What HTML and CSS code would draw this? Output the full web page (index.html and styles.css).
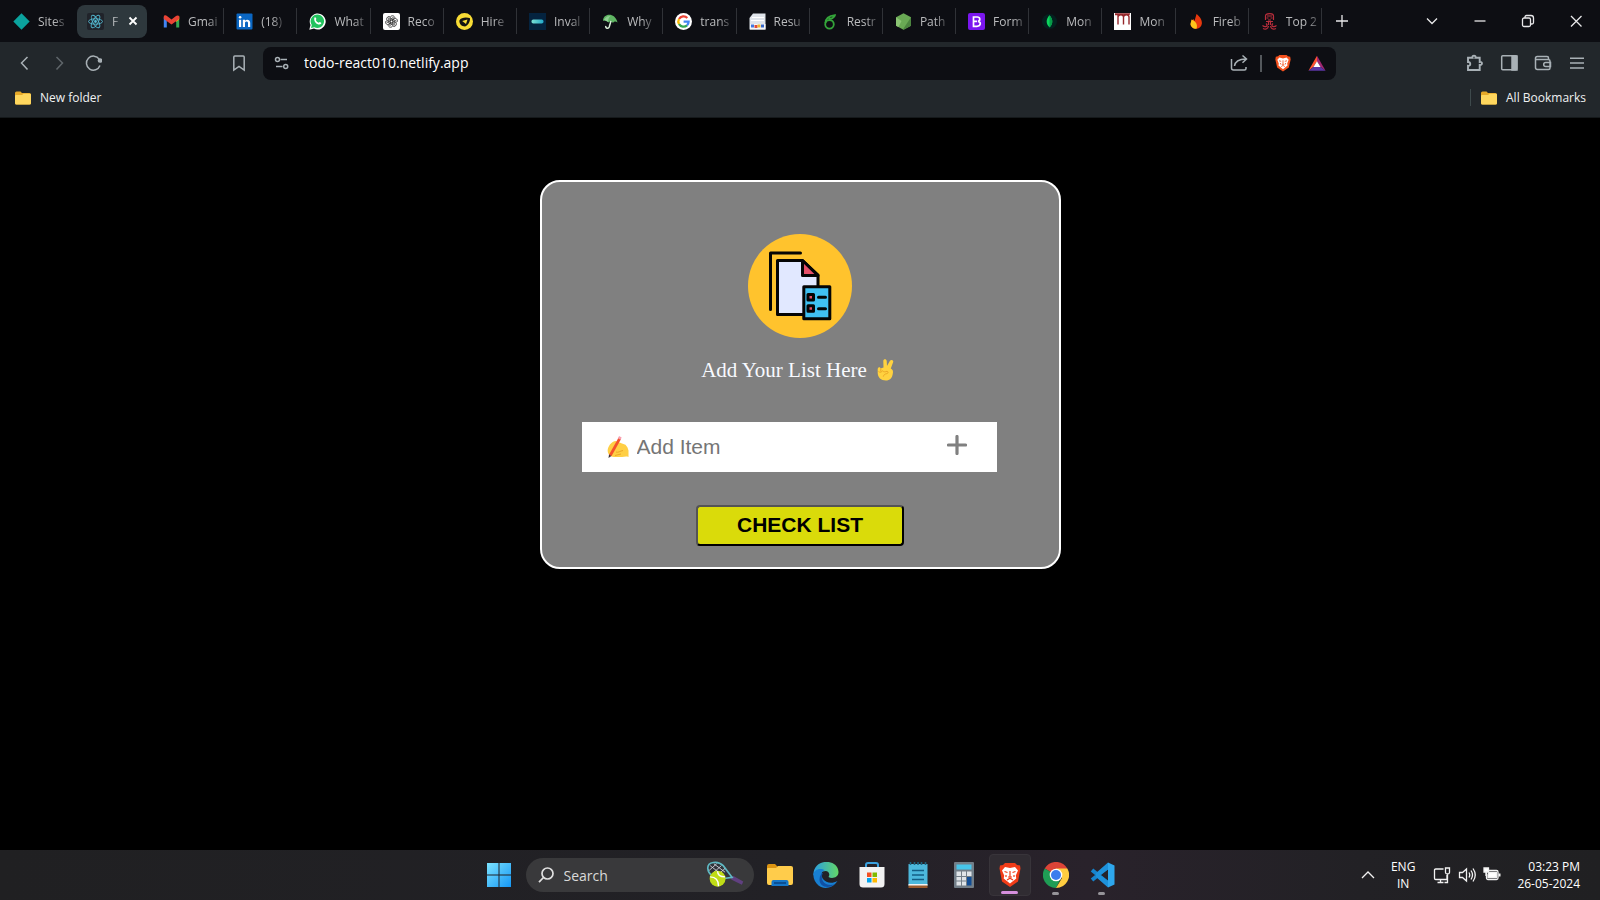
FILE: index.html
```
<!DOCTYPE html>
<html lang="en">
<head>
<meta charset="utf-8">
<title>Todo list</title>
<link rel="stylesheet" href="styles.css">
</head>
<body>
<header class="browser">
  <div class="tabstrip">
    <nav class="tabs" aria-label="Open tabs">
      <button class="tab pinned"><svg class="fav" viewBox="0 0 17 17"><path d="M8.500 .3 16.700 8.500 8.500 16.700.3 8.500z" fill="#0ba39e"/></svg><span>Sites</span></button>
      <button class="tab active"><svg class="fav" viewBox="0 0 17 17"><rect width="17" height="17" rx="2" fill="#20232a"/><g fill="none" stroke="#53b9d1" stroke-width=".9"><ellipse cx="8.500" cy="8.500" rx="7" ry="2.700"/><ellipse cx="8.500" cy="8.500" rx="7" ry="2.700" transform="rotate(60 8.500 8.500)"/><ellipse cx="8.500" cy="8.500" rx="7" ry="2.700" transform="rotate(120 8.500 8.500)"/></g><circle cx="8.500" cy="8.500" r="1.400" fill="#53b9d1"/></svg><span class="short">F</span><svg class="x" viewBox="0 0 10 10"><path d="m1.500 1.500 7 7m0-7-7 7" stroke="#fff" stroke-width="1.800"/></svg></button>
      <button class="tab"><svg class="fav" viewBox="0 0 17 17"><path d="M.8 4v10.500h3V7z" fill="#4285f4"/><path d="M16.200 4v10.500h-3V7z" fill="#34a853"/><path d="M13.200 4.500 16.200 3v3.500l-3 2.500z" fill="#fbbc04"/><path d="M.8 3.500C1 2 3 2 4 3l4.500 3.500L13 3c1-1 3-.8 3.200.8V6L8.500 11.500.8 6z" fill="#ea4335"/></svg><span>Gmai</span></button>
      <button class="tab"><svg class="fav" viewBox="0 0 17 17"><rect x=".5" y=".5" width="16" height="16" rx="1" fill="#0a66c2"/><path d="M3 6.800h2.200V14H3zM6.800 6.800H9v1c1.300-2 5.200-1.500 5.200 2V14H12v-4c0-2-3-2-3 0v4H6.800z" fill="#fff"/><circle cx="4.100" cy="4.300" r="1.300" fill="#fff"/></svg><span>(18)</span></button>
      <button class="tab"><svg class="fav" viewBox="0 0 17 17"><path d="M.3 16.700 1.500 12A8 8 0 1 1 5 15.600z" fill="#fff"/><path d="m2 15 .8-3A6.700 6.700 0 1 1 5.300 14.200z" fill="#22c35e"/><path d="M5.400 4.700c1-1 1.400-.3 2 1.400L6.800 7c.7 1.500 1.500 2.200 3 2.800l.9-.9c2 .8 2 1.100 1.100 2.200C9.500 13 4 9 5.400 4.700z" fill="#fff"/></svg><span>What</span></button>
      <button class="tab"><svg class="fav" viewBox="0 0 17 17"><rect width="17" height="17" rx="2" fill="#fff"/><g fill="none" stroke="#222" stroke-width=".8"><path id="petal" d="M7.200 9.300V5C7.200 2.200 11.200 2 11.800 4.600M7.200 6.200 10.600 4.300"/><use href="#petal" transform="rotate(60 8.500 8.500)"/><use href="#petal" transform="rotate(120 8.500 8.500)"/><use href="#petal" transform="rotate(180 8.500 8.500)"/><use href="#petal" transform="rotate(240 8.500 8.500)"/><use href="#petal" transform="rotate(300 8.500 8.500)"/></g></svg><span>Reco</span></button>
      <button class="tab"><svg class="fav" viewBox="0 0 17 17"><circle cx="8.500" cy="8.500" r="8.500" fill="#f8dc35"/><path d="M3.400 7.500C5 4.200 11 4 14 5.300c.3 3-2 7.500-5 8.200C5.500 13.500 3 10.500 3.400 7.500z" fill="#131313"/><path d="M6.200 8 11.500 6.500 10 11z" fill="#f8dc35"/></svg><span>Hire</span></button>
      <button class="tab"><svg class="fav" viewBox="0 0 17 17"><defs><linearGradient id="bar"><stop stop-color="#7be0d4"/><stop offset="1" stop-color="#22a9c9"/></linearGradient></defs><rect width="17" height="17" fill="#04233f"/><rect x="2.500" y="6.500" width="12" height="4" rx="1.800" fill="url(#bar)"/></svg><span>Inval</span></button>
      <button class="tab"><svg class="fav" viewBox="0 0 17 17"><path d="M1 8C1 0 13-1 15.500 9.500c-2-1.500-3.500-1-4.500.5C9.500 8 8 8 6.200 9.500 5 7.500 3 7 1 8z" fill="#5fb563"/><path d="m9 8-1.800 6c-.8 2.300-4.200 1.200-3.300-1" fill="none" stroke="#d9eed9" stroke-width="1.500"/><path d="M2 7C4 3.500 6 3 8.500 3 6.500 4.500 6 6.500 6.200 9z" fill="#8fcf92"/></svg><span>Why</span></button>
      <button class="tab"><svg class="fav" viewBox="0 0 17 17"><circle cx="8.500" cy="8.500" r="8.500" fill="#fff"/><g fill="none" stroke-width="2.300"><path d="M12.300 5A5.200 5.200 0 0 0 4 6" stroke="#ea4335"/><path d="M4 6a5.200 5.200 0 0 0 0 5" stroke="#fbbc05"/><path d="M4 11a5.200 5.200 0 0 0 8 1.400" stroke="#34a853"/><path d="M12 12.400a5.200 5.200 0 0 0 1.600-3.700h-5" stroke="#4285f4"/></g></svg><span>trans</span></button>
      <button class="tab"><svg class="fav" viewBox="0 0 17 17"><path d="M4 .5h12.500v16H.5V5z" fill="#dfe4ea"/><path d="M3 4.500h12M2 7.500h13" stroke="#fff" stroke-width="1.200"/><path d="M1 11h15.500v5.500H1z" fill="#f7f7f7"/><path d="M2 11.500h3v3H2z" fill="#4178e0"/><path d="M5.500 12h3v3h-3z" fill="#e14b3d"/><path d="M8.500 11.500h3v3h-3z" fill="#f1b52c"/><path d="M12 11.500h3v3h-3z" fill="#3667c8"/></svg><span>Resu</span></button>
      <button class="tab"><svg class="fav" viewBox="0 0 17 17"><g fill="none" stroke="#34a53a" stroke-width="1.800"><circle cx="7.500" cy="11.300" r="4.300"/><path d="M3.500 10C3.500 6 7 3 13 2.200 12.500 5 9 6.200 6.500 5.500"/></g></svg><span>Restr</span></button>
      <button class="tab"><svg class="fav" viewBox="0 0 17 17"><path d="m8.500.3 7.500 4v8.400l-7.500 4-7.500-4V4.300z" fill="#69a954"/><path d="M1 4.300 6.500 8 3.500 14 1 12.700z" fill="#8bc574"/><path d="m16 4.300-8 12 .5.400 7.500-4z" fill="#4c853f"/></svg><span>Path</span></button>
      <button class="tab"><svg class="fav" viewBox="0 0 17 17"><rect width="17" height="17" rx="2" fill="#7b16ef"/><path d="M5.500 4h3.700c3.400 0 3.200 3.800.8 4.300 3.300.5 3 5-1 5H5.500zM5.500 8.400H9" fill="none" stroke="#fff" stroke-width="1.700"/></svg><span>Form</span></button>
      <button class="tab"><svg class="fav" viewBox="0 0 17 17"><circle cx="8.500" cy="8.500" r="7.500" fill="#04201f"/><path d="M8.500 2.300c4 4.200 3.500 9 0 12-3.500-3-4-7.800 0-12z" fill="#0bd55c"/><path d="M8.500 2.300v12.500c3.500-3.500 4-8 0-12.500z" fill="#079b48"/></svg><span>Mon</span></button>
      <button class="tab"><svg class="fav" viewBox="0 0 17 17"><path fill="#fff" d="M0 0h17v17H0z"/><path d="M1 1.500h3v10M4 4c.5-3 5.500-3 5.500 0v7.500M9.500 4c.5-3 5.500-3 5.500 0v7.500M1 1h15" fill="none" stroke="#96272b" stroke-width="1.400"/></svg><span>Mon</span></button>
      <button class="tab"><svg class="fav" viewBox="0 0 17 17"><path d="M8.500 1c3 2 6 6 5.300 10-.8 6-9.200 6.500-11 1-.8-3 1.500-5 2.700-6l1 2z" fill="#e8380d"/><path d="M3.500 6.500c4 1.500 6.500 5 5 9.300C5 16 2.500 13.500 2.500 11z" fill="#ffc51b"/></svg><span>Fireb</span></button>
      <button class="tab"><svg class="fav" viewBox="0 0 17 17"><g fill="none" stroke="#b92e3c" stroke-width="1.200"><path d="M4.500 7V3c0-3.200 8-3.200 8 0v4M6 3h5M5.500 5h2m2 0h2M7 7h3M5 8.500h7M7.500 9v3M9.500 9v3M5 10.500c3 3-1 4-3.500 2m10.500-2c-3 3 1 4 3.500 2M2 15.500c3 1.500 5 0 5.500-2.500m7.500 2.500c-3 1.500-5 0-5.500-2.500"/></g></svg><span>Top 2</span></button>
    </nav>
    <button class="newtab" aria-label="New tab"><svg viewBox="0 0 14 14"><path d="M7 1v12M1 7h12"/></svg></button>
    <div class="window-controls">
      <button aria-label="Search tabs"><svg viewBox="0 0 14 14"><path d="m2 4.500 5 5 5-5"/></svg></button>
      <button aria-label="Minimise"><svg viewBox="0 0 14 14"><path d="M1.500 7h11"/></svg></button>
      <button aria-label="Restore"><svg viewBox="0 0 14 14"><rect x="1.500" y="4" width="8" height="8.500" rx="1.500"/><path d="M4 4V3q0-1.500 1.500-1.500H10q2.500 0 2.500 2.500v4.500Q12.500 10 11 10h-1.500"/></svg></button>
      <button aria-label="Close"><svg viewBox="0 0 14 14"><path d="m2 2 10.500 10.500m0-10.500L2 12.500"/></svg></button>
    </div>
  </div>
  <div class="toolbar">
    <div class="history">
      <button aria-label="Back"><svg viewBox="0 0 18 18"><path d="M11.500 3 5.500 9l6 6.500"/></svg></button>
      <button class="dim" aria-label="Forward"><svg viewBox="0 0 18 18"><path d="m6.500 3 6 6-6 6.500"/></svg></button>
      <button aria-label="Reload"><svg viewBox="0 0 18 18"><path d="M16 11.500A7 7 0 1 1 15.300 5.300"/><circle cx="16" cy="6.500" r="1.600" fill="#a9b1b6"/></svg></button>
    </div>
    <button class="bookmark" aria-label="Bookmark this page"><svg viewBox="0 0 18 18"><path d="M3.800 3q0-1 1-1h8.400q1 0 1 1v13L9 12.300 3.800 16z"/></svg></button>
    <div class="address">
      <button aria-label="Site information"><svg viewBox="0 0 18 18"><circle cx="4.500" cy="5.500" r="2"/><path d="M7.500 5.500H14M3 12.500h6.500"/><circle cx="12.700" cy="12.500" r="2"/></svg></button>
      <input type="text" value="todo-react010.netlify.app" aria-label="Address">
      <button aria-label="Share"><svg viewBox="0 0 18 18"><path d="M1.500 5v9q0 2 2 2h11q1.500 0 1.500-1.500V13M4.500 12C5 7.500 8 5.200 16 5M12.500 1.500 16.500 5l-4 3.800"/></svg></button>
      <span class="bar"></span>
      <button aria-label="Shields"><svg viewBox="0 0 18 20"><path d="M5 1h8l1.500 1.500L17 3l.5 3-2 9L9 19.500 2.500 15l-2-9L1 3l2.500-.5z" fill="#f4511e" stroke="none"/><path d="m5 4 4 1 4-1 2.300 2.500-1.600 4 .3 2.200L9 17 4 12.700l.3-2.200-1.600-4z" fill="#fff" stroke="none"/><path d="m4.500 7.500 2.500.7M13.500 7.500l-2.500.7M9 7v4M7.500 11.500h3M7 14l2-1.300 2 1.300M6.200 10v1.500M11.800 10v1.500" stroke="#f4511e" stroke-width=".9"/></svg></button>
      <button class="bat" aria-label="Rewards"><svg viewBox="0 0 20 18"><g stroke="none"><path d="M10 1 .5 17.500 6 13.500 10 7z" fill="#ff5230"/><path d="m10 1 9.500 16.500L14 13.500 10 7z" fill="#a02672"/><path d="M.5 17.500h19L14 13.500H6z" fill="#5b36a4"/><path d="m10 7 4 6.500H6z" fill="#fff"/></g></svg></button>
    </div>
    <div class="extras">
      <button aria-label="Extensions"><svg viewBox="0 0 18 18"><path stroke-width="1.900" d="M2 3.800h4.500C5.500 1 10.500 1 9.500 3.800h4.200V8c3-.8 3 3.500 0 3v5H2v-4.200c3 .5 3-4.300 0-3.800z"/></svg></button>
      <button aria-label="Sidebar"><svg viewBox="0 0 18 18"><rect x="1.700" y="1.700" width="15" height="14" rx="1"/><path d="M12 2h5v14h-5z" fill="#a9b1b6"/></svg></button>
      <button aria-label="Wallet"><svg viewBox="0 0 18 18"><path d="M14.500 5.500V4q0-1.500-1.500-1.500H3.200q-1.700 0-1.700 1.700T3.200 5.500h11q1.800 0 1.800 1.500v7q0 1.500-1.500 1.500h-11q-2 0-2-2V4M16.500 8.500h-4.800q-2 0-2 2t2 2h4.800z"/></svg></button>
      <button aria-label="Menu"><svg viewBox="0 0 18 18"><path d="M2 4.200h14M2 9h14M2 14h14"/></svg></button>
    </div>
  </div>
  <div class="bookmarks">
    <a href="#"><svg class="folder" viewBox="0 0 16 14"><path d="M0 2Q0 .5 1.500.5h4L7 2h7.500Q16 2 16 3.500v8.500q0 1.500-1.500 1.500h-13Q0 13.500 0 12z" fill="#e7a928"/><path d="M0 5q0-1 1-1h6l1.500-1.300h6Q16 2.700 16 4v8q0 1.500-1.500 1.500h-13Q0 13.500 0 12z" fill="#ffd75e"/></svg>New folder</a>
    <a class="all" href="#"><svg class="folder" viewBox="0 0 16 14"><path d="M0 2Q0 .5 1.500.5h4L7 2h7.500Q16 2 16 3.500v8.500q0 1.500-1.500 1.500h-13Q0 13.500 0 12z" fill="#e7a928"/><path d="M0 5q0-1 1-1h6l1.500-1.300h6Q16 2.700 16 4v8q0 1.500-1.500 1.500h-13Q0 13.500 0 12z" fill="#ffd75e"/></svg>All Bookmarks</a>
  </div>
</header>

<main class="page">
  <form class="card">
    <svg class="logo" viewBox="0 0 104 104"><circle cx="52" cy="52" r="52" fill="#ffc32d"/><g stroke="#050505" stroke-width="3" stroke-linecap="round" stroke-linejoin="round"><path d="M22.500 75.500V19H52.500" fill="none"/><path d="M29.500 26.500h25L70 41v39.500H29.500z" fill="#e1e8ff"/><path d="M54.500 26.500V41.500H70z" fill="#e64f68"/><path d="M55.800 52.800h26v32h-26z" fill="#40c1f3"/><path d="M60 60.500h5.500V66H60zM60 71.800h5.500v5.500H60z" fill="#e64f68"/><path d="M70.500 63.300h7M70.500 74.700h7"/></g></svg>
    <p class="caption">Add Your List Here <svg class="victory" viewBox="0 0 18 22" role="img" aria-label="Victory hand"><path d="M3.500 9.500 6.500 8.500 6.300 2.200C6.300-.2 9.500-.2 9.700 2L10 7l2.800-5.100c1.200-2 4.200-.6 3.300 1.400L13.800 9.500c2 1 2.500 2.500 2 5-.5 4.500-3 7-7 7C4 21.500.8 18.500.7 14V10C1 7.800 3.400 7.800 3.500 9.500z" fill="#ffd23f"/><path d="M1.500 12.500c1.500 1.200 3 1 4-.8 1 1.500 3 1.200 4.500.6 1.500.3 1.500 2-.2 2.300-2.200.4-3.200 1.500-3.500 3M3.800 9.500v3" fill="none" stroke="#eca727"/></svg></p>
    <div class="entry">
      <svg class="writing" viewBox="0 0 22 22" aria-hidden="true"><path d="M.8 13C2 8.500 5.500 5.500 8.500 5l4 1.500 2.500 1 3.500 1.300 2 2.700 1 3v6.500c-3-1-4.500.2-7 0H7C3 20.500 0 18 .8 13z" fill="#ffcf45"/><path d="M9 16c2 1 4-1 7-1.500m-8 5 6-1.500" stroke="#eca727" fill="none"/><path d="m3.200 19.500 9.500-17" stroke="#f4512c" stroke-width="2.800"/><path d="m12.200 3 1.200-2.200" stroke="#f7a1b2" stroke-width="3"/><path d="m2 18.500 2.400 1.400-2.900 2z" fill="#39353a"/></svg>
      <input type="text" placeholder="Add Item" aria-label="Add Item">
      <button type="button" aria-label="Add"><svg viewBox="0 0 20 20"><path d="M10 1.500v17M1.500 10h17" stroke="#808080" stroke-width="3.200" stroke-linecap="round"/></svg></button>
    </div>
    <button class="check" type="button">CHECK LIST</button>
  </form>
</main>

<footer class="taskbar">
  <div></div>
  <div class="apps">
    <button aria-label="Start"><svg viewBox="0 0 26 26"><defs><linearGradient id="win" x2="1" y2="1"><stop stop-color="#7ce3ff"/><stop offset="1" stop-color="#1597f5"/></linearGradient></defs><path d="M1 1h11.500v11.500H1zM13.500 1H25v11.500H13.500zM1 13.500h11.500V25H1zM13.500 13.500H25V25H13.500z" fill="url(#win)"/></svg></button>
    <label class="search"><svg class="lens" viewBox="0 0 16 16"><circle cx="9.500" cy="6.500" r="5.500"/><path d="M5.500 10.500 1 15.200"/></svg><input type="search" placeholder="Search" aria-label="Search"><svg class="racket" viewBox="0 0 42 30"><path d="m25 17 4-1 10.500 6-1.500 3.500L27 20z" fill="#604080"/><path d="M1.500 8C1 1 12-1 18 5l9.500 12.500L17 19C8 18 2 14 1.500 8z" fill="#30343a" stroke="#5fb9c3" stroke-width="1.800"/><path d="m4 5 13 10M8 3l12 9M3 10l8-7M7 13l9-8M13 14l7-6" stroke="#d6d6e0" stroke-width=".9"/><circle cx="12" cy="19" r="8.500" fill="#bfdc16"/><path d="M4 17c5 0 9 3 9 10M12 11c0 4 3 6 8 6" fill="none" stroke="#fff" stroke-width="1.500"/></svg></label>
    <button aria-label="File Explorer"><svg viewBox="0 0 26 26"><path d="M0 4q0-2 2-2h6l3 3h13q2 0 2 2v8H0z" fill="#dc9412"/><path d="M0 7q0-1 1-1h8l2-2h13q2 0 2 2v15q0 2-2 2H2q-2 0-2-2z" fill="#ffcc4b"/><path d="M4.500 24v-4q0-2 2-2h13q2 0 2 2v4z" fill="#1576c8"/><path d="M7 21h12" stroke="#0b4f93" stroke-width="2"/></svg></button>
    <button aria-label="Edge"><svg viewBox="0 0 26 26"><defs><linearGradient id="edge"><stop stop-color="#2a9fe2"/><stop offset="1" stop-color="#63d667"/></linearGradient></defs><path d="M.5 13C0-4 25-4 25.500 10c0 6-7 7-10 5 2-3 0-6-3-6C7 9 5 14 7 18z" fill="url(#edge)"/><path d="M.5 12C1 8 7 5 12 8.500 8 8 8 14 10 17c3 4 9 5 14.500 2C20 26 11 28 5.500 23.500 2 20.500 0 16 .5 12z" fill="#187fd1"/><path d="M10.500 10.500c-4 5-1 14.500 11 12-7 5-15 2-15-5 0-4 2-6 4-7z" fill="#1050a4"/></svg></button>
    <button aria-label="Store"><svg viewBox="0 0 26 26"><path d="M7 6V3q0-2 2-2h8q2 0 2 2v3" fill="none" stroke="#3aa1df" stroke-width="2"/><path d="M.5 5h25v17q0 3.500-3.500 3.500H4Q.5 25.500.5 22z" fill="#f2f2f2"/><path d="M8 10.500h4.500V15H8z" fill="#f25022"/><path d="M13.500 10.500H18V15h-4.500z" fill="#7fba00"/><path d="M8 16h4.500v4.500H8z" fill="#00a4ef"/><path d="M13.500 16H18v4.500h-4.500z" fill="#ffb900"/></svg></button>
    <button aria-label="Notepad"><svg viewBox="0 0 26 26"><path d="M3.500 2h19v22h-19z" fill="#4cb8dc"/><path d="M3.500 23h19v3h-19z" fill="#9a5a2c"/><path d="M3.500 22h19v1.500h-19z" fill="#f2f2f2"/><path d="M7 8.500h12M7 13h12M7 17.500h12" stroke="#135e84" stroke-width="1.400"/><path d="M5.500 0v3M9.500 0v3M13 0v3M16.500 0v3M20.500 0v3" stroke="#1e6480" stroke-width="1.600"/></svg></button>
    <button aria-label="Calculator"><svg viewBox="0 0 26 26"><rect x="3" width="20" height="26" rx="1" fill="#727e88"/><path d="M5.500 2.500h15v5h-15z" fill="#47c5ea"/><path d="M5.500 9.500H10V14H5.500zM11 9.500h4V14h-4zM16 9.500h4.500V14H16zM5.500 15H10v3.500H5.500zM11 15h4v3.500h-4zM5.500 19.500H10v4H5.500zM11 19.500h4v4h-4z" fill="#dfe4e8"/><path d="M16 15h4.500v8.500H16z" fill="#104c94"/></svg></button>
    <button class="current" aria-label="Brave"><svg viewBox="0 0 26 26"><path d="M8 1h10l2 2 3 .5.500 3L21 19.500 13 25 5 19.500 2.500 6.500l.5-3L6 3z" fill="#f13c18"/><path d="m8 5 5 1 5-1 3 3.500-2.200 5 .5 3L13 21.500l-6.300-5 .5-3L5 8.500z" fill="#fff"/><path d="m7.500 9.500 3 1M18.500 9.500l-3 1M13 9v5.500M11 15h4M10 18l3-1.800 3 1.800M9 13v2M17 13v2" fill="none" stroke="#f13c18" stroke-width="1.200"/></svg></button>
    <button class="running" aria-label="Chrome"><svg viewBox="0 0 26 26"><path d="M13 13 1.700 6.500a13 13 0 0 1 22.600 0z" fill="#dc4437"/><path d="M13 13 1.700 6.500A13 13 0 0 0 13 26l5-10z" fill="#1f9d55"/><path d="M13 6.500h11.300A13 13 0 0 1 13 26l6-10z" fill="#ffcd40"/><circle cx="13" cy="13" r="6.300" fill="#fff"/><circle cx="13" cy="13" r="5" fill="#3b7ded"/></svg></button>
    <button class="running" aria-label="Visual Studio Code"><svg viewBox="0 0 26 26"><path d="m3 8 16 13M3 18 19 5" stroke="#1684cd" stroke-width="4" stroke-linejoin="round"/><path d="m19 .5 6.500 3v19l-6.500 3z" fill="#2ea7ed"/><path d="M19 .5v7L11 13l8 6v6.500L7 15v-4z" fill="#1e91da" fill-rule="evenodd"/><path d="m19 8-6.500 5 6.500 5z" fill="#25232a"/></svg></button>
  </div>
  <div class="tray">
    <button aria-label="Hidden icons"><svg viewBox="0 0 18 18"><path d="m3 12 6-6 6 6"/></svg></button>
    <div class="lang">ENG<br>IN</div>
    <div class="status">
      <svg viewBox="0 0 18 18"><path d="M10.500 3H2.700q-1.200 0-1.200 1.200v8q0 1.300 1.200 1.300H14V9M4.500 16.500h6M7.500 13.500v3"/><path d="M12.500 2h4v4.500q0 1.500-2 1.500t-2-1.500zM14.500 8v8.500h-3"/></svg>
      <svg viewBox="0 0 18 18"><path d="M1.500 6.500h3l4-3.500v12l-4-3.500h-3zM11 6.500q1.500 2.500 0 5M13 4.500q3 4.500 0 9M15 2.500q4.500 6.500 0 13"/></svg>
      <svg viewBox="0 0 18 18"><rect x="3.500" y="4.500" width="11.500" height="9" rx="1.500"/><path d="M6 6.500h7.500v5H5V9z" fill="#fff"/><path d="M16.500 7.500v3" stroke-width="2"/><path d="M1 2h4.500v4H1zM3 6v4" fill="#fff"/></svg>
    </div>
    <time class="clock">03:23 PM<br>26-05-2024</time>
  </div>
</footer>
</body>
</html>
```
FILE: styles.css
```
* { box-sizing: border-box; }
body {
  margin: 0;
  min-height: 100vh;
  display: flex;
  flex-direction: column;
  background: #000;
  color: #fff;
  font-family: "Open Sans", "Noto Sans", sans-serif;
  font-size: 12px;
}
button, input { font: inherit; color: inherit; background: none; border: 0; padding: 0; margin: 0; }
button { display: flex; align-items: center; justify-content: center; }
input { outline: 0; min-width: 0; }
svg { display: block; flex: none; }

/* tab strip */
.tabstrip { display: flex; align-items: center; height: 42px; background: #0d0e13; }
.tabs { flex: 0 1 1322px; min-width: 0; display: grid; grid-template-columns: 76px 75px repeat(16, minmax(0, 1fr)); align-items: center; }
.tab { height: 26px; padding: 0 0 0 12px; gap: 8px; justify-content: flex-start; border-right: 1px solid #303237; color: #babbbd; }
.tab span { flex: none; white-space: nowrap; -webkit-mask-image: linear-gradient(to left, rgba(0, 0, 0, .35), #000 10px); mask-image: linear-gradient(to left, rgba(0, 0, 0, .35), #000 10px); }
.tab.pinned { border: 0; padding-left: 13px; }
.tab.active { border: 0; height: 33px; margin: 0 4px 0 1px; padding: 0 9px 0 10px; background: #2e383d; border-radius: 8px; color: #fff; }
.tab.active .short { margin-right: auto; }
.fav { width: 17px; height: 17px; }
.x { width: 10px; height: 10px; }
.newtab { width: 40px; height: 33px; }
.newtab svg, .window-controls svg { width: 14px; height: 14px; fill: none; stroke: #e8e8ea; stroke-width: 1.3; }
.window-controls { display: flex; margin-left: auto; }
.window-controls button { width: 48px; height: 40px; }

/* toolbar */
.toolbar { display: flex; align-items: center; height: 42px; background: #22272b; }
.toolbar svg { width: 18px; height: 18px; fill: none; stroke: #a9b1b6; stroke-width: 1.5; }
.toolbar button { width: 34px; height: 32px; flex: none; }
.history { display: flex; padding-left: 8px; }
.dim { opacity: .45; }
.bookmark { margin-left: 112px; }
.address { flex: 0 1 1073px; min-width: 0; display: flex; align-items: center; height: 33px; margin-left: 7px; padding: 0 2px; background: #0d0e13; border-radius: 8px; }
.address input { flex: 1; padding: 0 0 2px 5px; font-size: 14px; }
.address .bar { width: 2px; height: 17px; margin: 0 4px; background: #54585c; }
.extras { display: flex; margin-left: auto; padding-right: 6px; }
.bookmarks { display: flex; align-items: center; justify-content: space-between; height: 34px; padding: 0 14px 6px 15px; background: #22272b; border-bottom: 1px solid #15191b; }
.bookmarks a { display: flex; align-items: center; gap: 9px; height: 17px; color: #f0f1f2; text-decoration: none; }
.bookmarks .all { padding-left: 10px; border-left: 1px solid #3e4a4c; }
.folder { width: 16px; height: 14px; }

/* list page */
.page { flex: 1; padding: 62px 20px; }
.card { max-width: 521px; margin: 0 auto; padding: 52px 40px 21px; display: flex; flex-direction: column; align-items: center; background: #808080; border: 2px solid #fff; border-radius: 20px; }
.logo { width: 104px; height: 104px; }
.caption { display: flex; align-items: center; gap: 10px; margin: 20px 0 40px; padding-right: 4px; font: 21px/24px "Liberation Serif", serif; color: #f8faff; }
.victory { width: 18px; height: 22px; }
.entry { align-self: stretch; display: flex; align-items: center; gap: 8px; height: 50px; margin-right: 22px; padding: 0 30px 0 25px; background: #fff; }
.entry input { flex: 1; font: 21px/24px "Liberation Sans", sans-serif; color: #333; }
.entry input::placeholder { color: #757575; opacity: 1; }
.entry button { margin-bottom: 5px; }
.entry button svg { width: 20px; height: 20px; }
.writing { width: 22px; height: 22px; }
.check { width: 208px; height: 41px; margin-top: 33px; padding-bottom: 2px; background: #dadb0a; border: 2px outset #000; border-radius: 4px; color: #000; font: bold 21px/24px "Liberation Sans", sans-serif; }

/* taskbar */
.taskbar { display: grid; grid-template-columns: 1fr auto 1fr; align-items: center; height: 50px; padding: 0 20px; background: linear-gradient(90deg, #202022, #222126 50%, #29222b 68%, #222125 85%, #202022); }
.apps { display: flex; align-items: center; gap: 4px; }
.apps button { position: relative; width: 42px; height: 42px; border-radius: 4px; }
.apps button svg { width: 26px; height: 26px; }
.apps .current { background: #302c32; border: 1px solid #38343a; }
.apps .current::after, .apps .running::after { content: ""; position: absolute; bottom: 1px; width: 7px; height: 3px; border-radius: 2px; background: #969499; }
.apps .current::after { width: 17px; background: #d58fdd; }
.search { display: flex; align-items: center; gap: 10px; width: 228px; height: 34px; margin: 0 1px 0 2px; padding: 0 8px 0 12px; border-radius: 17px; background: #39393b; }
.search input { flex: 1; font-size: 14px; }
.search input::placeholder { color: #dadada; opacity: 1; }
.lens { width: 16px; height: 16px; fill: none; stroke: #e0e0e0; stroke-width: 1.7; }
.racket { width: 40px; height: 28px; }
.tray { justify-self: end; display: flex; align-items: center; line-height: 17px; }
.tray svg { width: 18px; height: 18px; fill: none; stroke: #f2f2f2; stroke-width: 1.3; }
.lang { margin: 0 18px 0 14px; text-align: center; }
.status { display: flex; gap: 7px; margin-right: 16px; }
.clock { text-align: right; }
```
